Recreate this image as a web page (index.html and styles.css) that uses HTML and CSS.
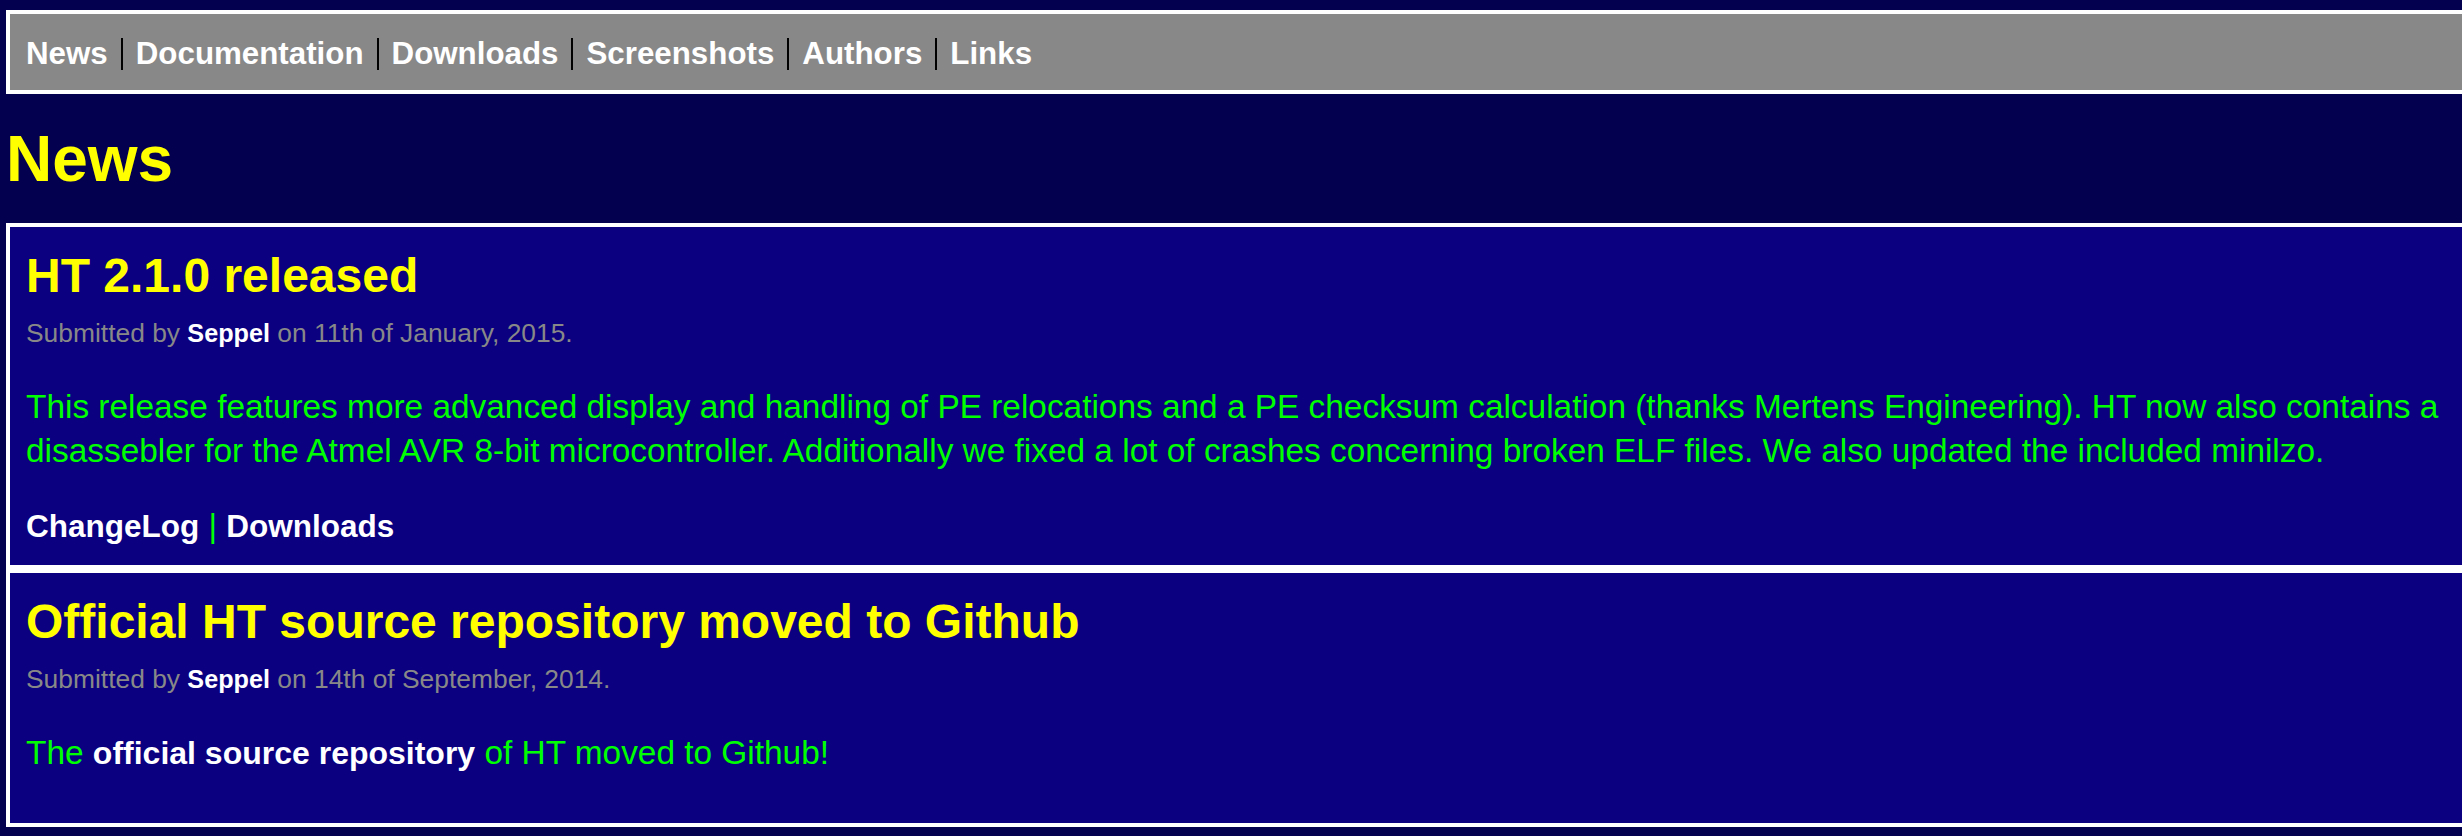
FILE: index.html
```html
<!DOCTYPE html>
<html lang="en">
<head>
<meta charset="utf-8">
<title>HT Editor - News</title>
<link rel="stylesheet" href="styles.css">
</head>
<body>
<div class="page">
  <nav class="topnav">
    <ul class="menu">
      <li class="menu-item"><a class="menu-link" href="#">News</a></li>
      <li class="menu-item"><a class="menu-link" href="#">Documentation</a></li>
      <li class="menu-item"><a class="menu-link" href="#">Downloads</a></li>
      <li class="menu-item"><a class="menu-link" href="#">Screenshots</a></li>
      <li class="menu-item"><a class="menu-link" href="#">Authors</a></li>
      <li class="menu-item"><a class="menu-link" href="#">Links</a></li>
    </ul>
  </nav>

  <h1 class="page-title">News</h1>

  <article class="post">
    <h2 class="post-title">HT 2.1.0 released</h2>
    <p class="post-meta">Submitted by <a class="author" href="#">Seppel</a> on 11th of January, 2015.</p>
    <p class="post-body">This release features more advanced display and handling of PE relocations and a PE checksum calculation (thanks Mertens Engineering). HT now also contains a disassebler for the Atmel AVR 8-bit microcontroller. Additionally we fixed a lot of crashes concerning broken ELF files. We also updated the included minilzo.</p>
    <p class="post-links"><a class="post-link" href="#">ChangeLog</a> | <a class="post-link" href="#">Downloads</a></p>
  </article>

  <article class="post">
    <h2 class="post-title">Official HT source repository moved to Github</h2>
    <p class="post-meta">Submitted by <a class="author" href="#">Seppel</a> on 14th of September, 2014.</p>
    <p class="post-body">The <a class="inline-link" href="#">official source repository</a> of HT moved to Github!</p>
  </article>
</div>
</body>
</html>
```

FILE: styles.css
```css
html {
  overflow: hidden;
  background: #040050;
}

body {
  margin: 0;
  padding: 10px 0 8px 3px;
  background: #040050;
  font-family: "Liberation Sans", Arial, Helvetica, sans-serif;
}

.page {
  width: 2580px;
}

a {
  text-decoration: none;
}

/* Top navigation */
.topnav {
  margin-left: 3px;
  background: #888888;
  border: 4px solid #ffffff;
  padding: 22px 16px 18px 16px;
}

.menu {
  list-style: none;
  margin: 0;
  padding: 0;
  display: flex;
}

.menu-item {
  display: flex;
  align-items: center;
  padding-right: 13px;
  font-size: 31.3px;
  line-height: 36px;
  font-weight: bold;
}

.menu-item + .menu-item::before {
  content: "";
  width: 2px;
  height: 32px;
  background: #000000;
  margin-right: 13px;
}

.menu-link {
  color: #ffffff;
}

/* Page heading */
.page-title {
  margin: 29px 0 28px 3px;
  font-size: 64px;
  line-height: 72px;
  font-weight: bold;
  color: #ffff00;
}

/* Posts */
.post {
  margin-left: 3px;
  background: #0a0080;
  border: 4px solid #ffffff;
  padding: 21px 16px 17px 16px;
}

.post-title {
  margin: 0 0 14px 0;
  font-size: 48px;
  line-height: 56px;
  font-weight: bold;
  color: #ffff00;
}

.post-meta {
  margin: 0 0 37px 0;
  font-size: 26.4px;
  line-height: 30px;
  color: #888888;
}

.author {
  color: #ffffff;
  font-weight: bold;
  font-size: 25.2px;
}

.post-body {
  margin: 0 0 31px 0;
  font-size: 33.4px;
  line-height: 44px;
  color: #00ff00;
}

.inline-link {
  color: #ffffff;
  font-weight: bold;
  font-size: 32px;
}

.post-links {
  margin: 0;
  font-size: 33px;
  line-height: 44px;
  color: #00ff00;
}

.post-link {
  color: #ffffff;
  font-weight: bold;
  font-size: 31.5px;
}
```
